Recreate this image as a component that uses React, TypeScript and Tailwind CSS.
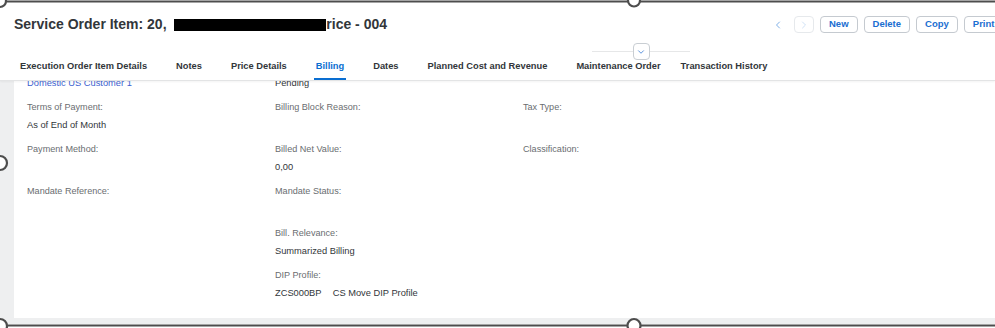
import { ChevronDown, ChevronLeft, ChevronRight } from "lucide-react";

const tabs = [
  "Execution Order Item Details",
  "Notes",
  "Price Details",
  "Billing",
  "Dates",
  "Planned Cost and Revenue",
  "Maintenance Order",
  "Transaction History",
];

type Field = { label: string; value?: string; link?: boolean };

// first row scrolls under the header, only its values peek out
const columns: Field[][] = [
  [
    { label: "", value: "Domestic US Customer 1", link: true },
    { label: "Terms of Payment:", value: "As of End of Month" },
    { label: "Payment Method:" },
    { label: "Mandate Reference:" },
  ],
  [
    { label: "", value: "Pending" },
    { label: "Billing Block Reason:" },
    { label: "Billed Net Value:", value: "0,00" },
    { label: "Mandate Status:" },
    { label: "Bill. Relevance:", value: "Summarized Billing" },
    { label: "DIP Profile:", value: "ZCS000BP\u2003\u2009CS Move DIP Profile" },
  ],
  [{ label: "" }, { label: "Tax Type:" }, { label: "Classification:" }],
];

function FieldBlock({ field }: { field: Field }) {
  return (
    <div className="mb-[6px]">
      <div className="h-[18px] text-[9.1px] leading-[18px] text-[#6a6d70]">{field.label}</div>
      <div
        className={
          "h-[18px] text-[9.3px] leading-[18px] whitespace-pre " +
          (field.link ? "text-[#3d5fcf]" : "text-[#32363a]")
        }
      >
        {field.value}
      </div>
    </div>
  );
}

function Frame() {
  return (
    <svg
      className="pointer-events-none absolute inset-0 z-20"
      width="995"
      height="328"
      viewBox="0 0 995 328"
    >
      <g stroke="#4d4d4d" strokeWidth="2.2" fill="white">
        <line x1="4" y1="1.5" x2="995" y2="1.5" />
        <line x1="4" y1="325.5" x2="995" y2="325.5" />
        <circle cx="0" cy="1" r="6" />
        <circle cx="634" cy="0.5" r="6" />
        <circle cx="0" cy="163" r="7" />
        <circle cx="0" cy="326" r="7" />
        <circle cx="634" cy="325.5" r="6.5" />
      </g>
    </svg>
  );
}

export default function App() {
  return (
    <div className="relative flex h-[328px] w-[995px] flex-col overflow-hidden bg-white font-['Liberation_Sans',Arial,sans-serif]">
      <Frame />

      <header className="relative z-10 h-[81px] shrink-0 border-b border-[#e3e4e5] bg-white shadow-[0_1px_2px_rgba(0,0,0,0.05)]">
        <div className="mt-[16px] flex h-[17px] items-center pl-[14px]">
          <h1 className="flex items-center whitespace-nowrap text-[14px] font-bold text-[#32363a]">
            Service Order Item: 20,&nbsp;&nbsp;
            <span className="inline-block h-[12px] w-[152px] bg-black" />
            rice - 004
          </h1>
          <div className="ml-auto mr-[-47px] flex shrink-0 items-center gap-[6px]">
            <button className="flex h-[17px] w-[20px] items-center justify-center text-[#5d9ae0]">
              <ChevronLeft size={12} strokeWidth={1.6} />
            </button>
            <button className="flex h-[17px] w-[20px] items-center justify-center rounded-[4px] border border-[#e6e9ec] text-[#c3d9f2]">
              <ChevronRight size={12} strokeWidth={1.6} />
            </button>
            {["New", "Delete", "Copy", "Print Preview"].map((b) => (
              <button
                key={b}
                className="h-[17px] whitespace-nowrap rounded-[4px] border border-[#c5cad0] px-[8px] text-[9.5px] font-bold text-[#1a6ed1]"
              >
                {b}
              </button>
            ))}
          </div>
        </div>

        <nav className="mt-[23px] flex pl-[20px]">
          {tabs.map((t, i) => (
            <div
              key={t}
              className={
                "flex h-[24px] flex-col whitespace-nowrap " +
                (i === 0 ? "" : i === 7 ? "ml-[20px]" : "ml-[29px]")
              }
            >
              <span
                className={
                  "text-[9.3px] font-bold leading-[21px] " +
                  (t === "Billing" ? "text-[#0a6ed1]" : "text-[#32363a]")
                }
              >
                {t}
              </span>
              <span
                className={"mt-[1px] h-[2px] " + (t === "Billing" ? "-mx-[2px] bg-[#0a6ed1]" : "bg-transparent")}
              />
            </div>
          ))}
        </nav>

        <div className="absolute left-[592px] top-[43px] flex w-[98px] items-center">
          <div className="h-px flex-1 bg-[#e6e7e8]" />
          <button className="flex h-[17px] w-[17px] items-center justify-center rounded-[4px] border border-[#c9ced3] bg-white text-[#3d7fd6]">
            <ChevronDown size={10} strokeWidth={2} />
          </button>
          <div className="h-px flex-1 bg-[#e6e7e8]" />
        </div>
      </header>

      <main className="flex h-[243px] shrink-0 bg-[#eeeff0] pb-[6px] pl-[14px]">
        <section className="flex-1 overflow-hidden bg-white pl-[13px]">
          <div className="-mt-[25px] flex">
            {columns.map((col, ci) => (
              <div key={ci} className="w-[248px]">
                {col.map((f, fi) => (
                  <FieldBlock key={fi} field={f} />
                ))}
              </div>
            ))}
          </div>
        </section>
      </main>
    </div>
  );
}
